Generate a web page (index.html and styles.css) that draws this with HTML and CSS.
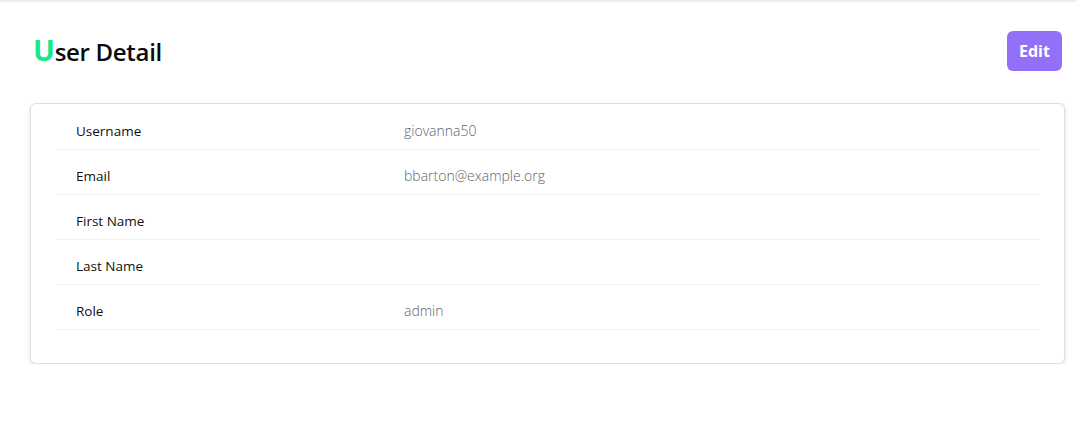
FILE: index.html
```html
<!DOCTYPE html>
<html lang="en">
<head>
<meta charset="utf-8">
<title>User Detail</title>
<link rel="stylesheet" href="styles.css">
</head>
<body>
<div class="topbar"></div>
<main class="page">
  <header class="page-header">
    <h1 class="title"><span class="first">U</span>ser Detail</h1>
    <button class="btn-edit" type="button">Edit</button>
  </header>
  <section class="card">
    <dl class="details">
      <div class="row"><dt>Username</dt><dd>giovanna50</dd></div>
      <div class="row"><dt>Email</dt><dd>bbarton@example.org</dd></div>
      <div class="row"><dt>First Name</dt><dd></dd></div>
      <div class="row"><dt>Last Name</dt><dd></dd></div>
      <div class="row"><dt>Role</dt><dd>admin</dd></div>
    </dl>
  </section>
</main>
</body>
</html>
```

FILE: styles.css
```css
* { box-sizing: border-box; }
html, body { margin: 0; padding: 0; background: #fff; }
body {
  font-family: "Open Sans", "Noto Sans", "Liberation Sans", sans-serif;
  color: #111;
}
.topbar {
  height: 2px;
  background: #eeeeef;
}
.page {
  padding: 29px 14px 0 30px;
}
.page-header {
  display: flex;
  align-items: center;
  justify-content: space-between;
  height: 40px;
  margin-bottom: 32px;
}
.title {
  margin: 0;
  padding-left: 3px;
  font-size: 24px;
  font-weight: 600;
  letter-spacing: -0.3px;
  line-height: 30px;
  color: #0b0b0b;
}
.title .first {
  font-size: 29px;
  font-weight: 700;
  color: #18e888;
}
.btn-edit {
  height: 40px;
  width: 55px;
  border: none;
  border-radius: 6px;
  background: #946ff8;
  color: #fff;
  font-family: inherit;
  font-size: 16px;
  font-weight: 700;
  padding: 0;
}
.card {
  width: 1035px;
  border: 1px solid #dfdfe3;
  border-radius: 6px;
  box-shadow: 0 2px 4px rgba(0, 0, 0, 0.12);
  padding: 1px 24px 33px 25px;
  background: #fff;
}
.details { margin: 0; }
.row {
  display: grid;
  grid-template-columns: repeat(3, 1fr);
  border-bottom: 1px solid #f0f0f2;
  padding: 16px 0 8px;
}
.row dt, .row dd {
  margin: 0;
  padding: 0 20px;
  font-size: 13.5px;
  line-height: 20px;
}
.row dt { color: #111; }
.row dd {
  grid-column: span 2;
  color: #5c6370;
  font-size: 14px;
  font-weight: 300;
}
```
